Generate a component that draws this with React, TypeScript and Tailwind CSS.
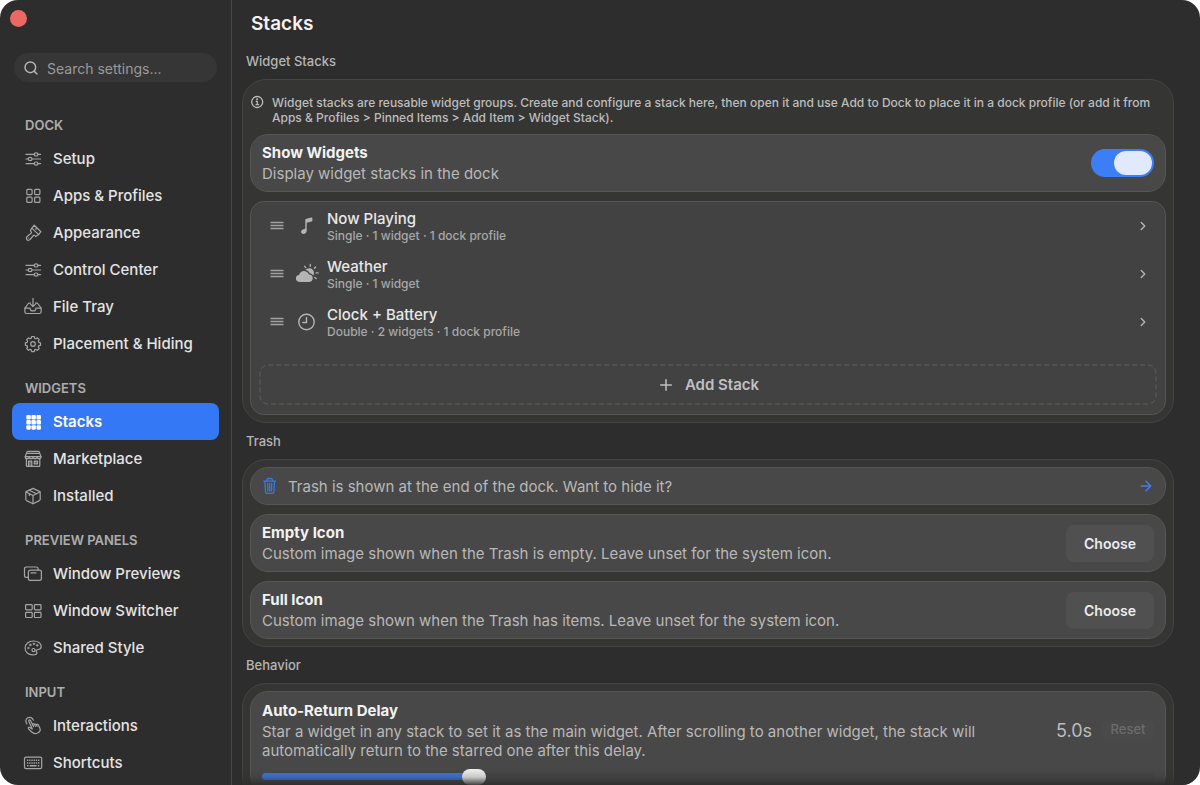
import { useState } from "react";
import type { ReactNode } from "react";
import { ArrowRight, ChevronRight, Plus, Search } from "lucide-react";

function Glyph({ children }: { children: ReactNode }) {
  return (
    <svg
      viewBox="0 0 20 20"
      className="h-5 w-5 shrink-0"
      fill="none"
      stroke="currentColor"
      strokeWidth="1.2"
      strokeLinecap="round"
      strokeLinejoin="round"
      aria-hidden="true"
    >
      {children}
    </svg>
  );
}

const icons = {
  sliders: (
    <Glyph>
      <path d="M3 5.4h8.2M15 5.4h2.6M3 10h2.2M9 10h8.6M3 14.6h8.2M15 14.6h2.6" />
      <ellipse cx="13.1" cy="5.4" rx="1.9" ry="1.6" />
      <ellipse cx="7.1" cy="10" rx="1.9" ry="1.6" />
      <ellipse cx="13.1" cy="14.6" rx="1.9" ry="1.6" />
    </Glyph>
  ),
  squares: (
    <Glyph>
      <rect x="3.8" y="3.3" width="5.3" height="5.3" rx="1" />
      <rect x="11.6" y="3.3" width="5.3" height="5.3" rx="1" />
      <rect x="3.8" y="11.1" width="5.3" height="5.3" rx="1" />
      <rect x="11.6" y="11.1" width="5.3" height="5.3" rx="1" />
    </Glyph>
  ),
  brush: (
    <Glyph>
      <path d="M11.2 2.2 17.9 8.7 15.6 11.6 8.9 5.1Z" />
      <path d="M8.9 5.1 7.7 7.1c-.3.5-.2.8.1 1.2l.5.6c.4.5.3.9-.1 1.2l-4 3.4c-1.5 1.3-.9 3.8 1.1 3.9.8 0 1.3-.4 1.7-.9l3.4-4c.4-.4.8-.5 1.2-.1l.7.6c.4.4.8.4 1.2.1l2.1-1.5" />
      <path d="m13.5 4.5-.6 1.8M5.4 15h.1" />
    </Glyph>
  ),
  tray: (
    <Glyph>
      <path d="M7.5 6.2H6.3c-.7 0-1.1.3-1.4.8l-3 4.2v3.800c0 .9.6 1.5 1.5 1.5h13.200c.9 0 1.5-.6 1.5-1.5v-3.800l-3-4.200c-.3-.5-.7-.8-1.4-.8h-1.200" />
      <path d="M2 11.200h4.700c.3 0 .6.3.6.7 0 1.200 1 2 2.700 2s2.700-.8 2.700-2c0-.4.3-.7.6-.7H18M10 1.300v8.200M7.700 7.300 10 9.600l2.300-2.300" />
    </Glyph>
  ),
  gear: (
    <Glyph>
      <path d="m8.7 2.5-.4 1.7-1.3.5-1.5-.9-1.8 1.8.9 1.5-.5 1.3-1.7.4v2.5l1.7.4.5 1.3-.9 1.5 1.8 1.8 1.5-.9 1.3.5.4 1.7h2.5l.4-1.7 1.3-.5 1.5.9 1.8-1.8-.9-1.5.5-1.3 1.7-.4V8.8l-1.7-.4-.5-1.3.9-1.5-1.8-1.8-1.5.9-1.3-.5-.4-1.7Z" />
      <circle cx="10" cy="10" r="2.3" />
    </Glyph>
  ),
  grid: (
    <Glyph>
      <g fill="currentColor" stroke="none">
        {[3, 8.1, 13.2].map((y) =>
          [3.3, 8.4, 13.5].map((x) => (
            <rect key={`${x}-${y}`} x={x} y={y} width="4.5" height="4.5" rx="1.1" />
          ))
        )}
      </g>
    </Glyph>
  ),
  store: (
    <Glyph>
      <path d="M4.6 4.4h11M5 2.3h10.3c.6 0 .9.3 1 .8l1.7 4.6H2.2l1.7-4.6c.2-.5.5-.8 1.1-.8Z" />
      <path d="M2.2 7.7c0 2.6 3.9 2.6 3.9 0 0 2.6 4 2.600 4 0 0 2.600 4 2.600 4 0 0 2.600 3.900 2.600 3.900 0M3.400 10v6.400c0 .6.3.9.9.9h11.600c.6 0 .9-.3.9-.9V10" />
      <path d="M5.5 17v-4.800h3.300V17M11.300 12.200h3.200v2.600h-3.200Z" fill="currentColor" fillOpacity=".5" />
    </Glyph>
  ),
  box: (
    <Glyph>
      <path d="m10 2.400 6.300 3c.6.300.9.700.9 1.300v6.600c0 .6-.3 1-.8 1.300L10 17.800l-6.400-3.200c-.5-.3-.8-.7-.8-1.300V6.700c0-.6.300-1 .9-1.300Z" />
      <path d="m3 6 7 3.500L17 6M10 9.500v8.200M6.300 4.200l7.100 3.500M6.300 7.600v2" />
    </Glyph>
  ),
  windows: (
    <Glyph>
      <path d="M5.3 13.4H3.400c-1.200 0-1.900-.7-1.900-1.900V4.900C1.500 3.700 2.200 3 3.400 3h9.800c1.200 0 1.900.7 1.900 1.900v1.200" />
      <rect x="5.4" y="6.2" width="13" height="10.2" rx="1.9" />
      <path d="M8 8.9h5" />
    </Glyph>
  ),
  panes: (
    <Glyph>
      <rect x="2.6" y="3.7" width="6.6" height="5.1" rx=".8" />
      <rect x="11.4" y="3.7" width="6.6" height="5.1" rx=".8" />
      <rect x="2.6" y="11.4" width="6.6" height="5.1" rx=".8" />
      <rect x="11.4" y="11.4" width="6.6" height="5.1" rx=".8" />
    </Glyph>
  ),
  palette: (
    <Glyph>
      <path d="M10.5 3C5.600 3 2.100 5.900 2.100 10c0 4.100 3.300 6.900 7.600 6.900 2.500 0 4.200-.7 4.200-1.900 0-.9-.7-1.300-.7-2.100 0-.9.8-1.300 2-1.400 1.900-.1 3-1 3-2.900C18.200 5.400 15 3 10.500 3Z" />
      <circle cx="10.5" cy="12.1" r="1.600" />
      <g fill="currentColor" strokeWidth=".6">
        <circle cx="5.3" cy="10" r=".8" />
        <circle cx="7.3" cy="6.9" r=".9" />
        <circle cx="10.9" cy="5.8" r=".9" />
        <circle cx="14.2" cy="7.3" r=".9" />
      </g>
    </Glyph>
  ),
  tap: (
    <Glyph>
      <path d="M3.900 7.800a3.800 3.800 0 1 1 6.400-3.600" />
      <path d="M9.300 12.900 5.800 5.300c-.5-1.200 1.100-1.900 1.700-.8l2.200 4.300c.1-1 1.500-1.200 1.900-.2.300-.8 1.500-.8 1.900.200.500-.7 1.600-.5 1.900.4l1.400 2.900c.9 2-.1 4-2.100 4.900-2.500 1.100-4.400.6-6-1l-3.200-3.200c-.8-.9.200-2 1.200-1.400Z" />
      <path d="m9.700 8.800.8 1.800M11.600 8.600l.8 1.700M13.500 8.800l.7 1.400" />
    </Glyph>
  ),
  keyboard: (
    <Glyph>
      <rect x="1.5" y="4.2" width="17.2" height="11.5" rx="1.6" />
      <path d="M4 7.200h12.400M4 9.900h12.400" strokeDasharray="1.300 .9" strokeLinecap="butt" strokeWidth="1.500" />
      <path d="M4 12.800h1.400M6.600 12.800h7M14.900 12.800h1.400" strokeLinecap="butt" strokeWidth="1.400" />
    </Glyph>
  ),
};

type IconName = keyof typeof icons;

const sections: { title: string; items: { label: string; icon: IconName }[] }[] = [
  {
    title: "DOCK",
    items: [
      { label: "Setup", icon: "sliders" },
      { label: "Apps & Profiles", icon: "squares" },
      { label: "Appearance", icon: "brush" },
      { label: "Control Center", icon: "sliders" },
      { label: "File Tray", icon: "tray" },
      { label: "Placement & Hiding", icon: "gear" },
    ],
  },
  {
    title: "WIDGETS",
    items: [
      { label: "Stacks", icon: "grid" },
      { label: "Marketplace", icon: "store" },
      { label: "Installed", icon: "box" },
    ],
  },
  {
    title: "PREVIEW PANELS",
    items: [
      { label: "Window Previews", icon: "windows" },
      { label: "Window Switcher", icon: "panes" },
      { label: "Shared Style", icon: "palette" },
    ],
  },
  {
    title: "INPUT",
    items: [
      { label: "Interactions", icon: "tap" },
      { label: "Shortcuts", icon: "keyboard" },
    ],
  },
];

const stacks = [
  {
    name: "Now Playing",
    detail: "Single · 1 widget · 1 dock profile",
    icon: (
      <svg viewBox="0 0 24 24" className="h-6 w-6" fill="currentColor" aria-hidden="true">
        <path d="M10.3 6.1c0-.8.4-1.200 1.100-1.400l5-1.100c.6-.1 1 .2 1 .8v2.200c0 .5-.3.8-.8.9l-4.200.9c-.5.1-.7.3-.7.8v7.400c0 2-1.400 3.400-3.200 3.400-1.400 0-2.400-.9-2.400-2.200 0-1.300.9-2.200 2.400-2.600l1.100-.3c.5-.1.7-.4.7-.9Z" />
      </svg>
    ),
  },
  {
    name: "Weather",
    detail: "Single · 1 widget",
    icon: (
      <svg viewBox="0 0 24 24" className="h-6 w-6" fill="currentColor" aria-hidden="true">
        <path d="M4.900 20C2.600 20 .9 18.500.9 16.500c0-1.900 1.300-3.200 3.100-3.400.5-2.400 2.500-4.100 5-4.100 2.300 0 4.100 1.300 4.900 3.300 2.300.2 3.900 1.700 3.900 3.900 0 2.200-1.700 3.800-4 3.800Z" />
        <path d="M10.400 8.100c.9-1.200 2.300-1.900 3.800-1.900 2.700 0 4.800 2.100 4.800 4.800 0 1-.3 1.900-.8 2.600-.8-1.300-2-2.100-3.500-2.400-.8-1.700-2.300-2.800-4.300-3.100Z" />
        <path
          d="M15.300 2.500v1.800M9.700 4.300l1.100 1.300M20.700 5l-1.300 1.200M21.100 10.900h2M19.800 15.400l1.300 1.200"
          stroke="currentColor"
          strokeWidth="1.3"
          strokeLinecap="round"
        />
      </svg>
    ),
  },
  {
    name: "Clock + Battery",
    detail: "Double · 2 widgets · 1 dock profile",
    icon: (
      <svg
        viewBox="0 0 24 24"
        className="h-6 w-6"
        fill="none"
        stroke="currentColor"
        strokeWidth="1.4"
        strokeLinecap="round"
        strokeLinejoin="round"
        aria-hidden="true"
      >
        <circle cx="11.5" cy="12" r="7.700" />
        <path d="M11.500 7.500V12.500H7.800" />
      </svg>
    ),
  },
];

function Sidebar() {
  return (
    <aside className="flex w-[232px] shrink-0 flex-col overflow-hidden border-r border-[#484848]">
      <div className="flex h-[53px] items-start px-2.5 pt-2.5">
        <button aria-label="Close window" className="h-[17px] w-[17px] rounded-full bg-[#ec6963]" />
      </div>
      <label className="mr-3.5 ml-3.5 flex h-[29px] shrink-0 items-center gap-2 rounded-full bg-[#363636] px-[9px] text-[#b4b4b4]">
        <Search className="h-4 w-4 shrink-0" strokeWidth={2.2} />
        <input
          type="search"
          aria-label="Search settings"
          placeholder="Search settings..."
          className="w-full min-w-0 bg-transparent pt-0.5 text-[14px] outline-none placeholder:text-[#9a9a9a]"
        />
      </label>
      <nav className="px-3 pt-[17px]">
        {sections.map((section) => (
          <div key={section.title} className="pt-4">
            <h2 className="mb-[5px] pl-[13px] text-[13px] leading-5 font-semibold text-[#adadad]">
              {section.title}
            </h2>
            {section.items.map((item) => {
              const active = item.label === "Stacks";
              return (
                <a
                  key={item.label}
                  href="#"
                  aria-current={active ? "page" : undefined}
                  className={
                    active
                      ? "flex h-[37px] items-center gap-2.5 rounded-lg bg-[#3478f6] pl-[11px] text-[15px] font-semibold text-white"
                      : "flex h-[37px] items-center gap-2.5 rounded-lg pl-[11px] text-[15px] font-medium text-[#e4e4e4]"
                  }
                >
                  <span className={active ? "text-white" : "text-[#a6a6a6]"}>{icons[item.icon]}</span>
                  <span className="pt-0.5">{item.label}</span>
                </a>
              );
            })}
          </div>
        ))}
      </nav>
    </aside>
  );
}

function Section({ title, children }: { title: string; children: ReactNode }) {
  return (
    <section className="pt-2">
      <h2 className="mb-2 pl-1 text-[13px] leading-5 font-medium text-[#b5b5b5]">{title}</h2>
      <div className="flex flex-col gap-[9px] rounded-[24px] border border-[#444442] bg-[#353533] p-[7px]">
        {children}
      </div>
    </section>
  );
}

function IconRow({ title, text }: { title: string; text: string }) {
  return (
    <div className="flex min-h-[58px] items-center rounded-[18px] border border-[#565653] bg-[#484848] px-[11px]">
      <div className="flex-1">
        <h3 className="text-[15px] leading-5 font-bold text-[#f2f2f2]">{title}</h3>
        <p className="text-[15px] leading-[21px] text-[#b8b8b8]">{text}</p>
      </div>
      <button
        aria-label={`Choose ${title}`}
        className="h-[37px] w-[88px] rounded-lg bg-[#505050] text-[14px] font-semibold text-[#ececec]"
      >
        Choose
      </button>
    </div>
  );
}

export default function App() {
  const [showWidgets, setShowWidgets] = useState(true);
  const [delay, setDelay] = useState(5);
  const fill = ((delay - 0.5) / 19.5) * 100;

  return (
    <div className="h-screen bg-white font-['Inter','Liberation_Sans',sans-serif]">
      <div className="flex h-full overflow-hidden rounded-[18px] bg-[#2d2d2d]">
        <Sidebar />
        <main className="relative flex min-w-0 flex-1 flex-col">
          <header className="flex h-[43px] shrink-0 items-center pt-1 pl-[19px]">
            <h1 className="text-[19px] leading-6 font-semibold text-[#f2f2f2]">Stacks</h1>
          </header>
          <div className="min-h-0 flex-1 overflow-hidden pr-[26px] pl-2.5">
            <Section title="Widget Stacks">
              <div className="flex gap-2 pt-2 pr-3 text-[#bdbdbd]">
                <svg
                  viewBox="0 0 14 14"
                  className="h-3.5 w-3.5 shrink-0"
                  fill="none"
                  stroke="currentColor"
                  strokeWidth="1.3"
                  strokeLinecap="round"
                  strokeLinejoin="round"
                  aria-hidden="true"
                >
                  <circle cx="7.2" cy="7" r="5.500" />
                  <path d="M6.200 6.300h1.100v3.200M6 9.600h2.600" />
                  <circle cx="7.1" cy="4.2" r=".4" />
                </svg>
                <p className="text-[12px] leading-[15px] font-medium">
                  Widget stacks are reusable widget groups. Create and configure a stack here, then open it and use Add
                  to Dock to place it in a dock profile (or add it from Apps &amp; Profiles &gt; Pinned Items &gt; Add
                  Item &gt; Widget Stack).
                </p>
              </div>

              <label className="flex min-h-[58px] items-center rounded-[18px] border border-[#565653] bg-[#484848] px-[11px]">
                <span className="flex-1">
                  <span className="block text-[15px] leading-5 font-bold text-[#f2f2f2]">Show Widgets</span>
                  <span className="block text-[15px] leading-[21px] text-[#b8b8b8]">
                    Display widget stacks in the dock
                  </span>
                </span>
                <input
                  type="checkbox"
                  role="switch"
                  checked={showWidgets}
                  onChange={(e) => setShowWidgets(e.target.checked)}
                  className="flex h-7 w-[63px] appearance-none rounded-full bg-[#5c5c5c] p-0.5 before:block before:h-6 before:w-[38px] before:rounded-full before:bg-[#e1eafc] checked:justify-end checked:bg-[#3b7ef6]"
                />
              </label>

              <div className="rounded-[14px] border border-[#555552] bg-[#424242] pb-[9px]">
                <ul>
                  {stacks.map((stack) => (
                    <li key={stack.name}>
                      <button className="flex h-12 w-full items-center pr-[15px] pl-[19px] text-left text-[#b4b4b4]">
                        <svg
                          viewBox="0 0 14 10"
                          className="h-2.5 w-3.5 shrink-0"
                          stroke="#a2a2a2"
                          strokeWidth="1.4"
                          aria-hidden="true"
                        >
                          <path d="M.5 1.500h13M.5 4.500h13M.5 7.500h13" />
                        </svg>
                        <span className="mr-2 ml-[11px] shrink-0">{stack.icon}</span>
                        <span className="flex-1">
                          <span className="block text-[15px] leading-[19px] font-medium text-[#e8e8e8]">
                            {stack.name}
                          </span>
                          <span className="block text-[12px] leading-4 font-medium text-[#a8a8a8]">
                            {stack.detail}
                          </span>
                        </span>
                        <ChevronRight className="h-3.5 w-3.5" strokeWidth={2.4} />
                      </button>
                    </li>
                  ))}
                </ul>
                <button className="relative mx-2 mt-[18px] flex h-[41px] w-[calc(100%-16px)] items-center justify-center gap-2.5 text-[15px] font-semibold text-[#c0c0c0]">
                  <svg className="absolute inset-0 h-full w-full overflow-visible p-px" fill="none" aria-hidden="true">
                    <rect width="100%" height="100%" rx="8" stroke="#5e5e5c" strokeDasharray="5 3" />
                  </svg>
                  <Plus className="h-[18px] w-[18px]" strokeWidth={2} />
                  <span className="pt-0.5">Add Stack</span>
                </button>
              </div>
            </Section>

            <Section title="Trash">
              <button className="flex h-[38px] items-center rounded-[18px] border border-[#565653] bg-[#484848] pr-[11px] pl-[11px] text-left text-[15px] text-[#b8b8b8]">
                <svg
                  viewBox="0 0 16 18"
                  className="mr-2.5 h-[18px] w-4"
                  fill="none"
                  stroke="#3a78e6"
                  strokeWidth="1.3"
                  strokeLinecap="round"
                  strokeLinejoin="round"
                  aria-hidden="true"
                >
                  <path d="M1.800 4.100h11.800M5 4V2.800c0-.8.500-1.300 1.300-1.300h2.800c.8 0 1.300.5 1.300 1.300V4M2.900 4.300l.6 10.700c.1.9.6 1.400 1.500 1.400h5.400c.9 0 1.400-.5 1.500-1.400l.6-10.700M5.700 6.500l.2 7.500M7.700 6.500V14M9.700 6.500 9.500 14" />
                </svg>
                <span className="flex-1 pt-0.5">Trash is shown at the end of the dock. Want to hide it?</span>
                <ArrowRight className="h-4 w-4 text-[#3f7df0]" strokeWidth={2.2} />
              </button>
              <IconRow
                title="Empty Icon"
                text="Custom image shown when the Trash is empty. Leave unset for the system icon."
              />
              <IconRow
                title="Full Icon"
                text="Custom image shown when the Trash has items. Leave unset for the system icon."
              />
            </Section>

            <Section title="Behavior">
              <div className="rounded-[18px] border border-[#565653] bg-[#484848] px-[11px] pt-2 pb-3">
                <div className="flex items-center">
                  <label htmlFor="delay" className="flex-1 pr-3">
                    <span className="block text-[15px] leading-[21px] font-bold text-[#f2f2f2]">
                      Auto-Return Delay
                    </span>
                    <span className="mt-px block text-[15px] leading-[19px] text-[#b8b8b8]">
                      Star a widget in any stack to set it as the main widget. After scrolling to another widget, the
                      stack will automatically return to the starred one after this delay.
                    </span>
                  </label>
                  <output htmlFor="delay" className="mr-2.5 text-[18px] text-[#bcbcbc]">
                    {delay.toFixed(1)}s
                  </output>
                  <button
                    disabled={delay === 5}
                    onClick={() => setDelay(5)}
                    className="h-5 w-[52px] rounded-md bg-[#4a4a4a] text-[13px] font-medium text-[#6c6c6c]"
                  >
                    Reset
                  </button>
                </div>
                <input
                  id="delay"
                  type="range"
                  min={0.5}
                  max={20}
                  step={0.5}
                  value={delay}
                  onChange={(e) => setDelay(Number(e.target.value))}
                  style={{ backgroundImage: `linear-gradient(to right, #3c78e4 ${fill}%, #454545 ${fill}%)` }}
                  className="mt-[13px] block h-[7px] w-full appearance-none rounded-full [&::-webkit-slider-thumb]:h-4 [&::-webkit-slider-thumb]:w-6 [&::-webkit-slider-thumb]:appearance-none [&::-webkit-slider-thumb]:rounded-full [&::-webkit-slider-thumb]:bg-[#f0f0f0]"
                />
              </div>
            </Section>
          </div>
          <div className="pointer-events-none absolute inset-x-0 bottom-0 h-4 bg-gradient-to-b from-transparent via-[#2d2d2d]/20 to-[#2d2d2d]/90" />
        </main>
      </div>
    </div>
  );
}
